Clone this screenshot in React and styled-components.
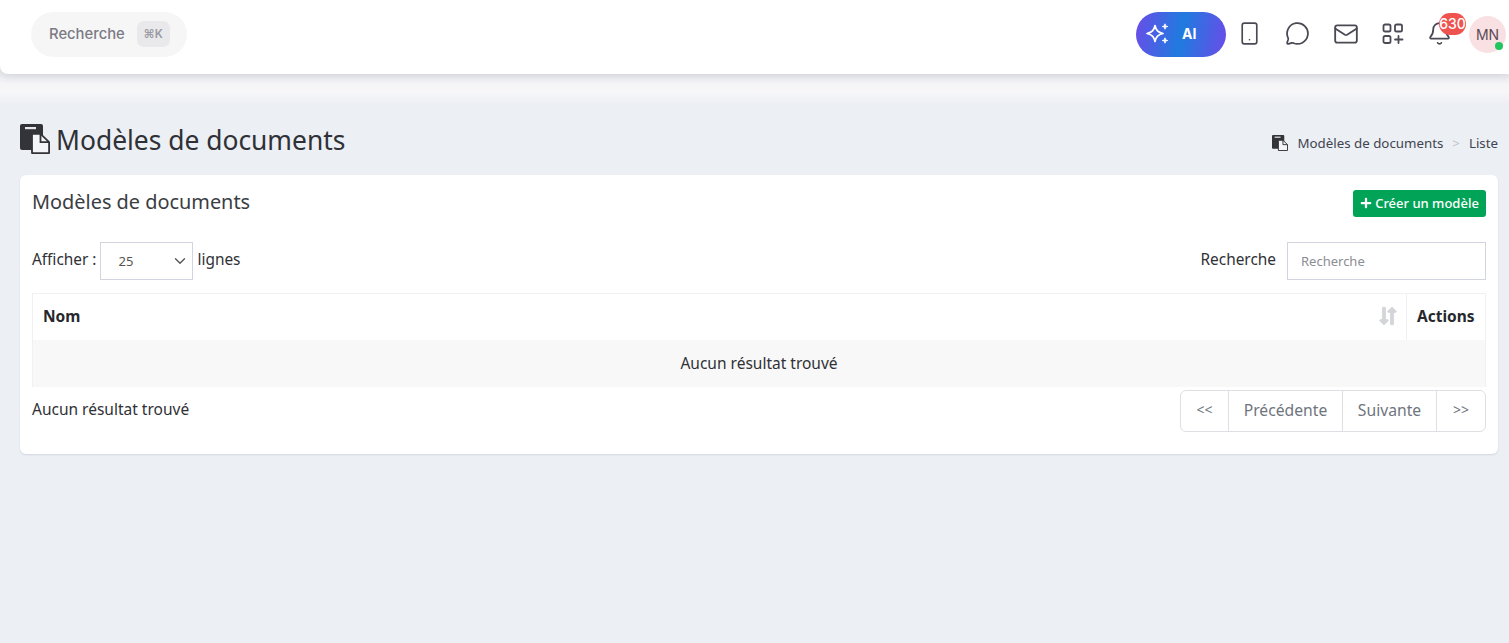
import React from "react";
import styled, { createGlobalStyle } from "styled-components";
import { FaPlus, FaLongArrowAltDown, FaLongArrowAltUp } from "react-icons/fa";
import { Smartphone, MessageCircle, Mail, Bell, ChevronDown } from "lucide-react";

const Global = createGlobalStyle`
  html, body { margin: 0; padding: 0; height: 100%; background: #eceff4; overflow: hidden; }
  * { box-sizing: border-box; }
  body { font-family: "Noto Sans", "Liberation Sans", sans-serif; color: #2f2f33; }
`;

const Page = styled.div`
  height: 643px;
  display: flex;
  flex-direction: column;
  background: linear-gradient(#eceef2 74px, #f5f5f8 84px, #f7f7fa 92px, #eceff4 104px);
`;
const Header = styled.header`
  height: 74px;
  flex: none;
  background: #fff;
  border-radius: 0 0 0 8px;
  box-shadow: 0 2px 8px rgba(60, 65, 90, 0.16);
  display: flex;
  align-items: center;
  justify-content: space-between;
  padding: 0 3px 5px 31px;
  position: relative;
  z-index: 1;
`;
const SearchPill = styled.div`
  width: 156px;
  height: 45px;
  border-radius: 23px;
  background: #f6f6f7;
  display: flex;
  align-items: center;
  padding: 0 0 2px 18px;
  gap: 12px;
  font-family: Inter, sans-serif;
  font-size: 14.8px;
  font-weight: 500;
  color: #7b7b85;
`;
const Kbd = styled.span`
  width: 33px;
  height: 26px;
  border-radius: 7px;
  background: #e9e9eb;
  color: #9a9aa3;
  font-size: 11.5px;
  font-weight: 600;
  display: flex;
  align-items: center;
  justify-content: center;
`;
const Tools = styled.div`
  display: flex;
  align-items: center;
`;
const AiButton = styled.div`
  width: 90px;
  height: 45px;
  border-radius: 23px;
  background: linear-gradient(100deg, #6b4ce8 0%, #1f7bdf 50%, #6b4ce8 100%);
  color: #fff;
  display: flex;
  align-items: center;
  padding: 0 0 2px 10px;
  gap: 10px;
  font-family: Inter, sans-serif;
  font-size: 14px;
  font-weight: 700;
`;
const IconSlot = styled.div`
  width: ${(p) => p.$w}px;
  height: 45px;
  padding-bottom: 2px;
  display: flex;
  align-items: center;
  justify-content: center;
  color: #4a4a55;
  position: relative;
`;
const Badge = styled.span`
  position: absolute;
  left: 21px;
  top: 1px;
  width: 27px;
  height: 22px;
  border-radius: 11px;
  background: #ef5350;
  color: #fff;
  font-family: Inter, sans-serif;
  font-size: 14px;
  font-weight: 500;
  line-height: 22px;
  text-align: center;
  white-space: nowrap;
`;
const Avatar = styled.div`
  width: 37px;
  height: 37px;
  margin-left: 9px;
  border-radius: 50%;
  background: #f9e0e3;
  color: #5c4a55;
  font-family: Inter, sans-serif;
  font-size: 14px;
  display: flex;
  align-items: center;
  justify-content: center;
  position: relative;
`;
const Dot = styled.span`
  position: absolute;
  right: 3px;
  bottom: 3px;
  width: 8px;
  height: 8px;
  border-radius: 50%;
  background: #22c55e;
`;
const Main = styled.main`
  flex: 1;
  margin-top: 26px;
  padding: 0 11px 0 20px;
`;
const TitleRow = styled.div`
  height: 75px;
  display: flex;
  align-items: center;
  justify-content: space-between;
  padding-top: 6px;
`;
const PageTitle = styled.h1`
  margin: 0;
  display: flex;
  align-items: center;
  gap: 6px;
  font-size: 26.4px;
  font-weight: 400;
  line-height: 1;
  color: #2f3136;
  & svg { margin-top: -3px; }
`;
const Crumbs = styled.div`
  display: flex;
  align-items: center;
  gap: 9px;
  font-size: 13.3px;
  color: #3f4450;
  margin-top: 4px;
`;
const CrumbSep = styled.span`
  color: #c0c3cc;
`;
const Card = styled.section`
  background: #fff;
  border-radius: 6px;
  box-shadow: 0 1px 2px rgba(60, 65, 90, 0.14);
  height: 279px;
  padding: 15px 12px 0;
`;
const CardHead = styled.div`
  display: flex;
  align-items: flex-start;
  justify-content: space-between;
  height: 52px;
`;
const CardTitle = styled.h2`
  margin: 0;
  font-size: 19.9px;
  font-weight: 400;
  line-height: 24px;
  color: #3a3d42;
`;
const CreateButton = styled.div`
  height: 27px;
  width: 133px;
  border-radius: 3px;
  background: #01a357;
  color: #fff;
  font-size: 13px;
  font-weight: 500;
  display: flex;
  align-items: center;
  justify-content: center;
  gap: 3px;
  padding-bottom: 1px;
`;
const Controls = styled.div`
  display: flex;
  justify-content: space-between;
  align-items: center;
  height: 38px;
  font-size: 15.4px;
  color: #2f3136;
`;
const ControlGroup = styled.div`
  display: flex;
  align-items: center;
  gap: ${(p) => p.$gap}px;
`;
const ControlLabel = styled.span`
  padding-bottom: 4px;
`;
const SelectBox = styled.div`
  width: 93px;
  height: 38px;
  border: 1px solid #d2d5e0;
  background: #fff;
  display: flex;
  align-items: center;
  justify-content: space-between;
  padding: 0 3px 0 17px;
  font-size: 13px;
  color: #555;
`;
const SearchInput = styled.div`
  width: 199px;
  height: 38px;
  border: 1px solid #d2d5e0;
  display: flex;
  align-items: center;
  padding: 0 13px;
  font-size: 13px;
  color: #8b8d94;
`;
const Table = styled.div`
  margin-top: 13px;
  border: 1px solid #f1f1f3;
  border-bottom: none;
`;
const HeadRow = styled.div`
  height: 46px;
  display: flex;
  align-items: center;
  font-size: 15.5px;
  font-weight: 700;
  color: #26282c;
`;
const NameCell = styled.div`
  flex: 1;
  height: 100%;
  padding: 0 10px 3px;
  display: flex;
  align-items: center;
  justify-content: space-between;
`;
const SortIcon = styled.span`
  display: flex;
  color: #d4d5d8;
  margin-right: -6px;
  & svg + svg { margin-left: -12px; }
  & svg { stroke: currentColor; stroke-width: 20px; }
`;
const ActionsCell = styled.div`
  width: 79px;
  height: 100%;
  border-left: 1px solid #f1f1f3;
  display: flex;
  align-items: center;
  padding: 0 0 3px 10px;
`;
const EmptyRow = styled.div`
  height: 47px;
  background: #f8f8f8;
  display: flex;
  align-items: center;
  justify-content: center;
  padding-bottom: 1px;
  font-size: 15.5px;
  color: #2f3136;
`;
const Footer = styled.div`
  display: flex;
  justify-content: space-between;
  align-items: flex-start;
  margin-top: 3px;
  font-size: 15.5px;
  color: #2f3136;
`;
const FooterText = styled.span`
  line-height: 38px;
`;
const Pager = styled.div`
  display: flex;
  height: 42px;
  border: 1px solid #dedfe3;
  border-radius: 6px;
`;
const PageItem = styled.div`
  width: ${(p) => p.$w}px;
  display: flex;
  align-items: center;
  justify-content: center;
  padding-bottom: 3px;
  font-size: ${(p) => (p.$small ? 14 : 15.7)}px;
  color: #6f757d;
  & + & { border-left: 1px solid #dedfe3; }
`;

const Sparkle = () => (
  <svg width="26" height="26" viewBox="0 0 26 26" fill="none" stroke="#fff" strokeWidth="1.7" strokeLinejoin="round">
    <path d="M9 4.5c1.1 5 2.9 6.900 8 8-5.100 1.100-6.900 3-8 8-1.100-5-2.900-6.900-8-8 5.100-1.100 6.900-3 8-8z" />
    <path fill="#fff" strokeWidth="1" d="M19 2.800c.3 1.700.9 2.400 2.700 2.700-1.800.3-2.400 1-2.700 2.700-.3-1.700-.9-2.400-2.700-2.700 1.800-.3 2.400-1 2.700-2.700zM19 16.800c.3 1.700.9 2.400 2.700 2.700-1.800.3-2.400 1-2.700 2.700-.3-1.700-.9-2.400-2.700-2.700 1.800-.3 2.400-1 2.700-2.700z" />
  </svg>
);
const GridPlus = () => (
  <svg width="24" height="24" viewBox="0 0 24 24" fill="none" stroke="currentColor" strokeWidth="1.8" strokeLinecap="round">
    <rect x="2.500" y="2.500" width="7" height="7" rx="1.600" />
    <rect x="14" y="2.500" width="7" height="7" rx="1.600" />
    <rect x="2.500" y="14" width="7" height="7" rx="1.600" />
    <path d="M17.500 14v7M14 17.500h7.500" />
  </svg>
);
const PasteIcon = ({ size }) => (
  <svg width={size} height={size} viewBox="0 0 30 30">
    <path fill="#333438" d="M2 0h19a2 2 0 0 1 2 2v24H2a2 2 0 0 1-2-2V2a2 2 0 0 1 2-2z" />
    <rect x="5" y="3" width="11" height="2.200" fill="#e8e9ee" />
    <path fill="#f4f5f9" stroke="#333438" strokeWidth="1.800" strokeLinejoin="round" d="M12 9.900h8.500l8.600 8.200v11H12z" />
    <path fill="none" stroke="#333438" strokeWidth="1.800" d="M20.500 9.900v8.200h8.600" />
  </svg>
);

export default function App() {
  return (
    <Page>
      <Global />
      <Header>
        <SearchPill>
          Recherche
          <Kbd>⌘K</Kbd>
        </SearchPill>
        <Tools>
          <AiButton>
            <Sparkle />
            AI
          </AiButton>
          <IconSlot $w={46}><Smartphone size={25} strokeWidth={1.6} /></IconSlot>
          <IconSlot $w={51}><MessageCircle size={25} strokeWidth={1.7} /></IconSlot>
          <IconSlot $w={45}><Mail size={26} strokeWidth={1.7} /></IconSlot>
          <IconSlot $w={50}><GridPlus /></IconSlot>
          <IconSlot $w={42}>
            <Bell size={25} strokeWidth={1.7} />
            <Badge>630</Badge>
          </IconSlot>
          <Avatar>
            MN
            <Dot />
          </Avatar>
        </Tools>
      </Header>
      <Main>
        <TitleRow>
          <PageTitle>
            <PasteIcon size={30} />
            Modèles de documents
          </PageTitle>
          <Crumbs>
            <PasteIcon size={16} />
            Modèles de documents
            <CrumbSep>&gt;</CrumbSep>
            Liste
          </Crumbs>
        </TitleRow>
        <Card>
          <CardHead>
            <CardTitle>Modèles de documents</CardTitle>
            <CreateButton>
              <FaPlus size={12} />
              Créer un modèle
            </CreateButton>
          </CardHead>
          <Controls>
            <ControlGroup $gap={4}>
              <ControlLabel>Afficher :</ControlLabel>
              <SelectBox>
                25
                <ChevronDown size={18} strokeWidth={1.8} color="#555" />
              </SelectBox>
              <ControlLabel>lignes</ControlLabel>
            </ControlGroup>
            <ControlGroup $gap={11}>
              <ControlLabel>Recherche</ControlLabel>
              <SearchInput>Recherche</SearchInput>
            </ControlGroup>
          </Controls>
          <Table>
            <HeadRow>
              <NameCell>
                Nom
                <SortIcon>
                  <FaLongArrowAltDown size={20} />
                  <FaLongArrowAltUp size={20} />
                </SortIcon>
              </NameCell>
              <ActionsCell>Actions</ActionsCell>
            </HeadRow>
            <EmptyRow>Aucun résultat trouvé</EmptyRow>
          </Table>
          <Footer>
            <FooterText>Aucun résultat trouvé</FooterText>
            <Pager>
              <PageItem $w={47} $small>&lt;&lt;</PageItem>
              <PageItem $w={114}>Précédente</PageItem>
              <PageItem $w={94}>Suivante</PageItem>
              <PageItem $w={49} $small>&gt;&gt;</PageItem>
            </Pager>
          </Footer>
        </Card>
      </Main>
    </Page>
  );
}
